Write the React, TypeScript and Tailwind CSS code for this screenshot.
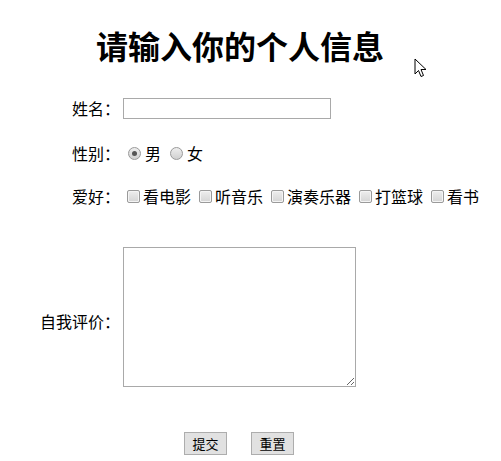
import React from "react";

const font = { fontFamily: '"Noto Sans CJK SC", "Noto Sans", sans-serif' };

function Checkbox() {
  return (
    <span className="ml-[4px] mr-[3px] inline-block h-[13px] w-[13px] rounded-[2px] border border-[#9a9a9a] bg-gradient-to-b from-[#eeeeee] to-[#d4d4d4] shadow-[inset_0_0_0_1px_#f4f4f4]" />
  );
}

function Radio({ checked }: { checked?: boolean }) {
  return (
    <span className="ml-[5px] mr-[4px] inline-flex h-[13px] w-[13px] items-center justify-center rounded-full border border-[#9a9a9a] bg-gradient-to-b from-[#eeeeee] to-[#d0d0d0]">
      {checked && <span className="h-[5px] w-[5px] rounded-full bg-[#555555]" />}
    </span>
  );
}

function Label({ children }: { children: React.ReactNode }) {
  return <div className="w-[120px] shrink-0 text-right text-[16px] leading-[22px]">{children}</div>;
}

export default function App() {
  const hobbies = ["看电影", "听音乐", "演奏乐器", "打篮球", "看书"];
  return (
    <div className="relative h-[461px] w-[501px] overflow-hidden bg-white text-black" style={font}>
      <h1 className="pl-[96px] pt-[24px] text-[32px] font-bold leading-[42px]">请输入你的个人信息</h1>

      <div className="mt-[27px] flex h-[30px] items-center gap-[3px]">
        <Label>姓名：</Label>
        <input type="text" className="h-[21px] w-[208px] border border-[#a9a9a9] bg-white outline-none" />
      </div>

      <div className="mt-[15px] flex h-[30px] items-center gap-[3px]">
        <Label>性别：</Label>
        <div className="flex items-center text-[16px] leading-[22px]">
          <Radio checked />
          <span>男</span>
          <span className="w-[4px]" />
          <Radio />
          <span>女</span>
        </div>
      </div>

      <div className="mt-[13px] flex h-[30px] items-center gap-[3px]">
        <Label>爱好：</Label>
        <div className="flex items-center text-[16px] leading-[22px] whitespace-nowrap">
          {hobbies.map((h, i) => (
            <span key={h} className={"flex items-center " + (i > 0 ? "ml-[4px]" : "")}>
              <Checkbox />
              <span>{h}</span>
            </span>
          ))}
        </div>
      </div>

      <div className="mt-[36px] flex h-[140px] items-center gap-[3px]">
        <div className="pt-[8px]">
          <Label>自我评价：</Label>
        </div>
        <textarea className="h-[140px] w-[233px] border border-[#a9a9a9] bg-white outline-none" />
      </div>

      <div className="mt-[45px] flex gap-[24px] pl-[184px]">
        <button className="h-[23px] w-[43px] border border-[#adadad] bg-[#e1e1e1] text-[13px] leading-[20px]">提交</button>
        <button className="h-[23px] w-[43px] border border-[#adadad] bg-[#e1e1e1] text-[13px] leading-[20px]">重置</button>
      </div>

      <svg className="absolute left-[414px] top-[58px]" width="14" height="22" viewBox="0 0 14 22">
        <path d="M1 1 L1 16 L4.5 12.5 L7 18.5 L9.5 17.5 L7 11.5 L12 11.5 Z" fill="white" stroke="black" strokeWidth="1" strokeLinejoin="round" />
      </svg>
    </div>
  );
}
